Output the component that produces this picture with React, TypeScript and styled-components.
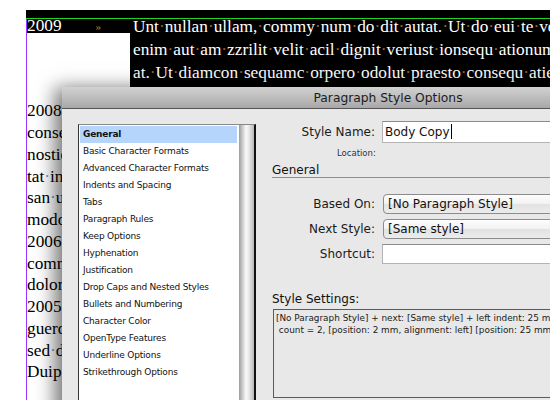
import React from 'react';
import styled, { createGlobalStyle } from 'styled-components';

const GlobalStyle = createGlobalStyle`
  html, body {
    margin: 0;
    padding: 0;
    background: #fff;
  }
  body {
    overflow: hidden;
  }
`;

const Stage = styled.div`
  position: relative;
  width: 550px;
  height: 400px;
  overflow: hidden;
  background: #fff;
`;

/* ---- document page behind the dialog ---- */

const Page = styled.div`
  padding: 10px 0 0 26px;
  font-family: 'Liberation Serif', 'Times New Roman', serif;
  font-size: 17.3px;
  white-space: nowrap;
`;

const TopStrip = styled.div`
  height: 8px;
  background: #000;
  border-bottom: 1px solid #22d422;
`;

const Frame = styled.div`
  display: grid;
  grid-template-columns: 103px 1fr;
  align-items: start;
  height: 381px;
  border-left: 1px solid #9b35ff;
`;

const MarginColumn = styled.div`
  color: #000;
`;

const YearHead = styled.div`
  height: 14px;
  line-height: 14px;
  background: #000;
  color: #fff;
`;

const MarginLines = styled.div`
  padding-top: 2px;
  line-height: 21.75px;
`;

const MarginLine = styled.div`
  height: 21.75px;
`;

const TabMark = styled.span`
  margin-left: 34px;
  font-size: 11px;
  color: #c57a1c;
  vertical-align: 1px;
`;

const BodyColumn = styled.div`
  height: 68px;
  background: #000;
  color: #fff;
  padding-left: 3px;
`;

const BodyLines = styled.div`
  margin-top: -4px;
  line-height: 23px;
`;

const SpaceDot = styled.span<{ $light?: boolean }>`
  color: ${(p) => (p.$light ? '#5a9ad8' : '#a0621e')};
`;

const Words = ({ text, light }: { text: string; light?: boolean }) => {
  const parts = text.split(' ');
  return (
    <>
      {parts.map((w, i) => (
        <React.Fragment key={i}>
          {i > 0 && <SpaceDot $light={light}>·</SpaceDot>}
          {w}
        </React.Fragment>
      ))}
    </>
  );
};

const bodyLines = [
  'Unt nullan ullam, commy num do dit autat. Ut do eui te vel',
  'enim aut am zzrilit velit acil dignit veriust ionsequ ationum',
  'at. Ut diamcon sequamc orpero odolut praesto consequ atie',
  'umsan Ibh ex ex eriusci blamcommy nim dolobore dunt',
];

const marginLines = [
  '',
  '',
  '',
  '2008',
  'consequat',
  'nostio',
  'tat in',
  'san ut',
  'modolor',
  '2006',
  'commy',
  'dolore',
  '2005',
  'guero',
  'sed do',
  'Duipit',
];

/* ---- dialog ---- */

const Dialog = styled.div`
  position: absolute;
  left: 62px;
  top: 87px;
  width: 652px;
  height: 420px;
  background: #e8e8e8;
  box-shadow: -4px 4px 18px 3px rgba(0, 0, 0, 0.55);
  font-family: 'DejaVu Sans', 'Lucida Grande', sans-serif;
  color: #111;
`;

const TitleBar = styled.div`
  height: 21px;
  border-bottom: 1px solid #555;
  background: linear-gradient(#d2d2d2, #a8a8a8);
  display: flex;
  align-items: center;
  justify-content: center;
  font-size: 12.3px;
  color: #1c1c1c;
`;

const DialogBody = styled.div`
  display: grid;
  grid-template-columns: 178px 1fr;
  column-gap: 16px;
  padding: 0 16px;
`;

const CategoryList = styled.ul`
  position: relative;
  margin: 15px 0 0;
  padding: 1px 17px 0 1px;
  height: 290px;
  list-style: none;
  background: #fff;
  border-top: 1px solid #888;
  border-left: 1px solid #333;
  border-right: 2px solid #111;

  &::after {
    content: '';
    position: absolute;
    top: 0;
    right: 0;
    bottom: 0;
    width: 15px;
    background: linear-gradient(to right, #9c9c9c, #f6f6f6 45%, #f0f0f0 60%, #b8b8b8);
  }
`;

const CategoryItem = styled.li<{ $active?: boolean }>`
  height: 17px;
  line-height: 17px;
  padding-left: 3px;
  font-size: 9px;
  letter-spacing: -0.2px;
  color: #111;
  background: ${(p) => (p.$active ? '#b6d5fd' : 'transparent')};
  font-weight: ${(p) => (p.$active ? 'bold' : 'normal')};
`;

const Panel = styled.div`
  display: flex;
  flex-direction: column;
  padding-top: 12px;
`;

const FieldRow = styled.div<{ $gap?: number }>`
  display: grid;
  grid-template-columns: 103px 1fr;
  column-gap: 7px;
  align-items: center;
  margin-top: ${(p) => p.$gap ?? 0}px;
`;

const Label = styled.label`
  text-align: right;
  font-size: 12px;
  color: #1a1a1a;
`;

const SmallLabel = styled.div`
  height: 12px;
  margin-top: 4px;
  padding-left: 65px;
  font-size: 8.5px;
  line-height: 12px;
  color: #333;
`;

const TextBox = styled.div<{ $height: number }>`
  height: ${(p) => p.$height}px;
  box-sizing: border-box;
  background: #fff;
  border: 1px solid #b4b4b4;
  border-top-color: #8a8a8a;
  padding-left: 2px;
  font-size: 12px;
  line-height: ${(p) => p.$height - 2}px;
  color: #111;
`;

const Caret = styled.span`
  display: inline-block;
  width: 1px;
  height: 15px;
  margin-left: 1px;
  vertical-align: -3px;
  background: #000;
`;

const Popup = styled.div`
  height: 20px;
  box-sizing: border-box;
  margin-left: 1px;
  border: 1px solid #8c8c8c;
  border-radius: 4px 0 0 4px;
  background: linear-gradient(#fdfdfd, #f2f2f2 50%, #e2e2e2 51%, #ececec);
  padding-left: 4px;
  font-size: 12px;
  line-height: 18px;
  color: #111;
`;

const SectionHeading = styled.div<{ $rule?: boolean; $gap: number }>`
  margin-top: ${(p) => p.$gap}px;
  font-size: 12px;
  line-height: 14px;
  color: #111;
  border-bottom: ${(p) => (p.$rule ? '1px solid #8e8e8e' : 'none')};
`;

const SettingsBox = styled.div`
  margin: 3px 0 0 1px;
  height: 89px;
  box-sizing: border-box;
  border: 1px solid #5a5a5a;
  padding: 2px 0 0 2px;
  font-size: 8.9px;
  line-height: 12px;
  color: #222;
  white-space: pre;
  overflow: hidden;
`;

const categories = [
  'General',
  'Basic Character Formats',
  'Advanced Character Formats',
  'Indents and Spacing',
  'Tabs',
  'Paragraph Rules',
  'Keep Options',
  'Hyphenation',
  'Justification',
  'Drop Caps and Nested Styles',
  'Bullets and Numbering',
  'Character Color',
  'OpenType Features',
  'Underline Options',
  'Strikethrough Options',
];

const App = (): React.ReactElement => {
  return (
    <Stage>
      <GlobalStyle />
      <Page>
        <TopStrip />
        <Frame>
          <MarginColumn>
            <YearHead>
              2009<TabMark>»</TabMark>
            </YearHead>
            <MarginLines>
              {marginLines.map((line, i) => (
                <MarginLine key={i}>
                  <Words text={line} light />
                </MarginLine>
              ))}
            </MarginLines>
          </MarginColumn>
          <BodyColumn>
            <BodyLines>
              {bodyLines.map((line, i) => (
                <div key={i}>
                  <Words text={line} />
                </div>
              ))}
            </BodyLines>
          </BodyColumn>
        </Frame>
      </Page>

      <Dialog>
        <TitleBar>Paragraph Style Options</TitleBar>
        <DialogBody>
          <CategoryList>
            {categories.map((c, i) => (
              <CategoryItem key={c} $active={i === 0}>
                {c}
              </CategoryItem>
            ))}
          </CategoryList>
          <Panel>
            <FieldRow>
              <Label>Style Name:</Label>
              <TextBox $height={22}>
                Body Copy<Caret />
              </TextBox>
            </FieldRow>
            <SmallLabel>Location:</SmallLabel>
            <SectionHeading $rule $gap={4}>
              General
            </SectionHeading>
            <FieldRow $gap={16}>
              <Label>Based On:</Label>
              <Popup>[No Paragraph Style]</Popup>
            </FieldRow>
            <FieldRow $gap={5}>
              <Label>Next Style:</Label>
              <Popup>[Same style]</Popup>
            </FieldRow>
            <FieldRow $gap={5}>
              <Label>Shortcut:</Label>
              <TextBox $height={20} />
            </FieldRow>
            <SectionHeading $gap={28}>Style Settings:</SectionHeading>
            <SettingsBox>
              {'[No Paragraph Style] + next: [Same style] + left indent: 25 mm + first indent: -25 mm + tabs:\n count = 2, [position: 2 mm, alignment: left] [position: 25 mm, alignment: left]'}
            </SettingsBox>
          </Panel>
        </DialogBody>
      </Dialog>
    </Stage>
  );
};

export default App;
